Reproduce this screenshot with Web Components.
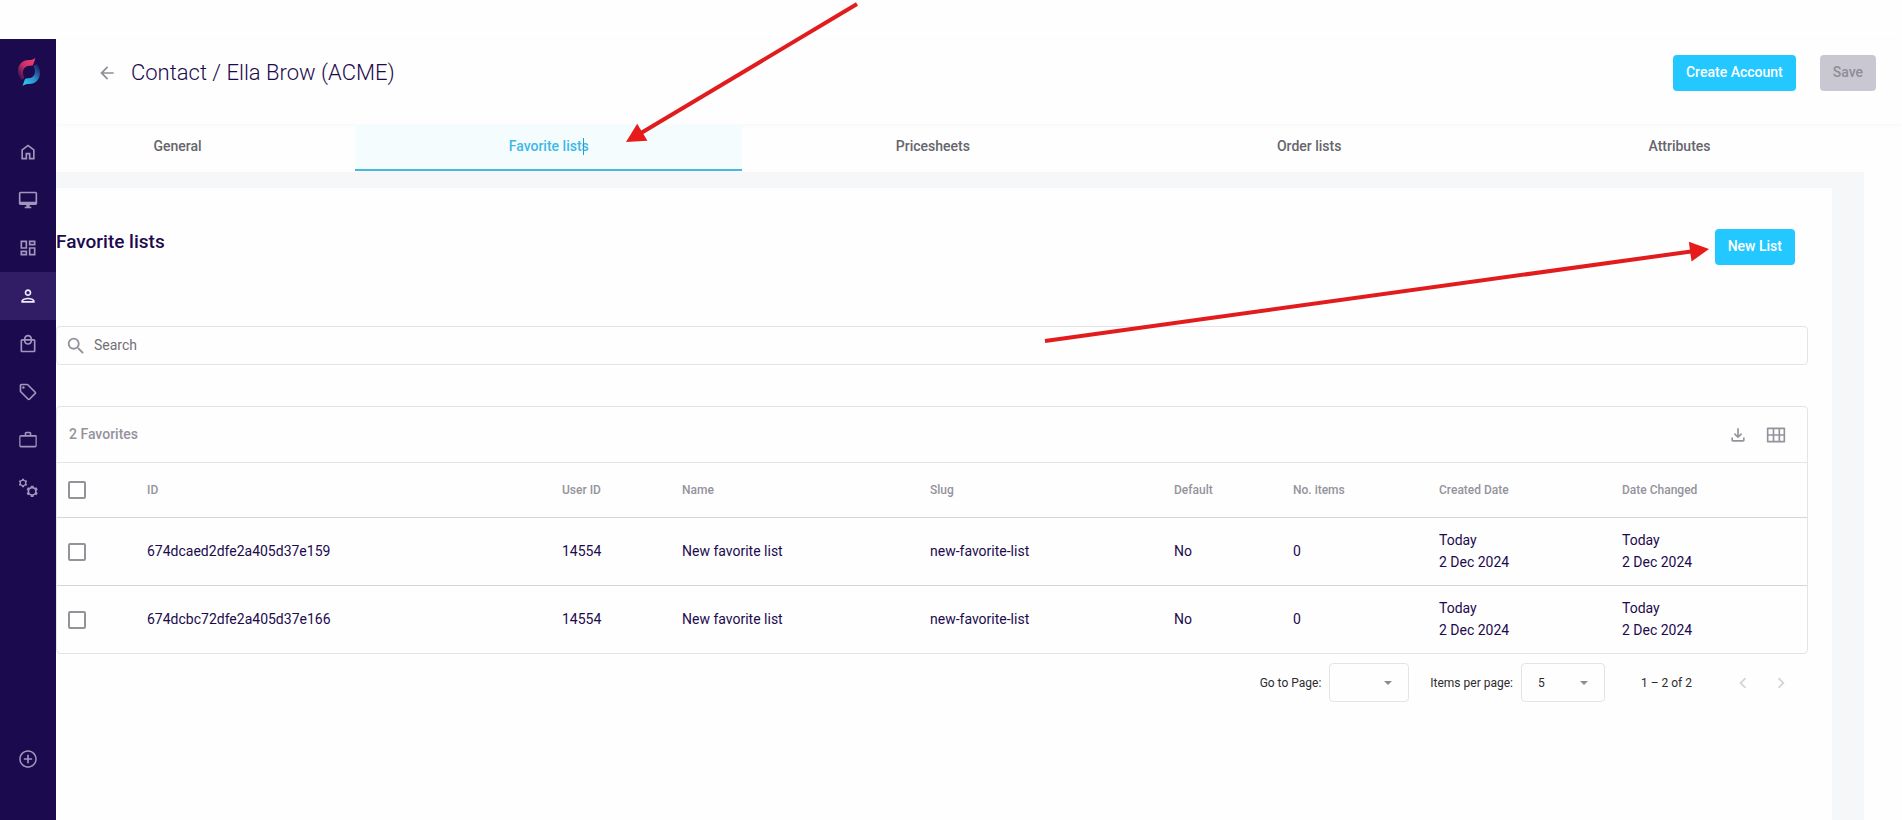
<!DOCTYPE html>
<html lang="en">
<head>
<meta charset="utf-8">
<title>Contact / Ella Brow (ACME)</title>
<style>
  body { margin: 0; background: #fefefe; color: #1c0a4e; font: 14px/20px Roboto, "Liberation Sans", sans-serif; }
</style>
</head>
<body>
<app-shell>
  <side-nav slot="nav"></side-nav>
  <page-header slot="header">
    Contact / Ella Brow (ACME)
    <ui-button slot="actions">Create Account</ui-button>
    <ui-button slot="actions" disabled>Save</ui-button>
  </page-header>
  <tab-bar slot="tabs"></tab-bar>
  <favorite-lists></favorite-lists>
</app-shell>

<script>
const ICONS = {
  home: 'M6 19h3v-6h6v6h3v-9l-6-4.5L6 10v9Zm-2 2V9l8-6 8 6v12h-7v-6h-2v6H4Z',
  monitor: 'M21 2H3c-1.1 0-2 .9-2 2v12c0 1.1.9 2 2 2h7v2H8v2h8v-2h-2v-2h7c1.1 0 2-.9 2-2V4c0-1.100-.9-2-2-2Zm0 12H3V4h18v10Z',
  dashboard: 'M19 5v2h-4V5h4M9 5v6H5V5h4m10 8v6h-4v-6h4M9 17v2H5v-2h4M21 3h-8v6h8V3ZM11 3H3v10h8V3Zm10 8h-8v10h8V11Zm-10 4H3v6h8v-6Z',
  person: 'M12 6c1.100 0 2 .9 2 2s-.9 2-2 2-2-.9-2-2 .9-2 2-2m0 10c2.700 0 5.800 1.290 6 2H6c.23-.72 3.310-2 6-2m0-12C9.790 4 8 5.790 8 8s1.790 4 4 4 4-1.790 4-4-1.790-4-4-4Zm0 10c-2.670 0-8 1.340-8 4v2h16v-2c0-2.660-5.330-4-8-4Z',
  bag: 'M19 6h-2c0-2.760-2.240-5-5-5S7 3.240 7 6H5c-1.100 0-2 .9-2 2v12c0 1.100.9 2 2 2h14c1.100 0 2-.9 2-2V8c0-1.100-.9-2-2-2Zm-7-3c1.660 0 3 1.340 3 3H9c0-1.660 1.340-3 3-3Zm7 17H5V8h2c0 2.760 2.240 5 5 5s5-2.240 5-5h2v12ZM9 8h6c0 1.660-1.340 3-3 3S9 9.660 9 8Z',
  tag: 'm21.410 11.580-9-9C12.050 2.220 11.550 2 11 2H4c-1.100 0-2 .9-2 2v7c0 .55.22 1.050.59 1.420l9 9c.36.36.86.58 1.410.58s1.050-.22 1.410-.59l7-7c.37-.36.59-.86.59-1.410s-.23-1.060-.59-1.420ZM13 20.010 4 11V4h7v-.01l9 9-7 7.020ZM6.500 5a1.500 1.500 0 1 0 0 3 1.500 1.500 0 0 0 0-3Z',
  work: 'M14 6V4h-4v2h4ZM3 8v11h18V8H3Zm18-2c.83 0 1.500.67 1.500 1.500V19c0 1.100-.9 2-2 2h-17c-1.100 0-2-.9-2-2V8c0-1.100.9-2 2-2H8V4c0-1.100.9-2 2-2h4c1.100 0 2 .9 2 2v2h5Z',
  add: 'M13 7h-2v4H7v2h4v4h2v-4h4v-2h-4V7Zm-1-5.500C6.200 1.500 1.500 6.200 1.500 12S6.200 22.500 12 22.500 22.500 17.800 22.500 12 17.800 1.500 12 1.500Zm0 19.200c-4.800 0-8.700-3.900-8.700-8.700S7.200 3.300 12 3.300s8.700 3.900 8.700 8.700-3.900 8.700-8.700 8.700Z',
  back: 'M20 11H7.830l5.590-5.590L12 4l-8 8 8 8 1.410-1.410L7.830 13H20v-2Z',
  search: 'M15.500 14h-.79l-.28-.27A6.470 6.470 0 0 0 16 9.500 6.500 6.500 0 1 0 9.500 16c1.610 0 3.090-.59 4.230-1.570l.27.28v.79l5 4.990L20.490 19l-4.990-5Zm-6 0C7.010 14 5 11.990 5 9.500S7.010 5 9.500 5 14 7.010 14 9.500 11.990 14 9.500 14Z',
  download: 'M12 16l-5-5 1.400-1.450 2.600 2.600V4h2v8.150l2.600-2.600L17 11l-5 5ZM6 20c-1.100 0-2-.9-2-2v-3h2v3h12v-3h2v3c0 1.100-.9 2-2 2H6Z',
  grid: 'M22 3H2C1.400 3 1 3.400 1 4v16c0 .6.400 1 1 1h20c.6 0 1-.4 1-1V4c0-.6-.4-1-1-1ZM8 11H3V5h5v6Zm7 0h-5V5h5v6Zm6 0h-4V5h4v6ZM8 19H3v-6h5v6Zm7 0h-5v-6h5v6Zm6 0h-4v-6h4v6Z',
  prev: 'M15.410 7.410 14 6l-6 6 6 6 1.410-1.410L10.830 12l4.580-4.590Z',
  next: 'M10 6 8.590 7.410 13.170 12l-4.580 4.590L10 18l6-6-6-6Z'
};

/* Outline of a gear with six teeth, with a round hole in it */
function gear(cx, cy, r) {
  const pts = [];
  for (let i = 0; i < 6; i++) {
    for (const [da, k] of [[-13, 1], [13, 1], [20, .78], [40, .78]]) {
      const a = (i * 60 + 30 + da - 60) * Math.PI / 180;
      pts.push((cx + r * k * Math.cos(a)).toFixed(2) + ' ' + (cy + r * k * Math.sin(a)).toFixed(2));
    }
  }
  const h = r * .5;
  return `M${pts.join('L')}ZM${cx - h} ${cy}a${h} ${h} 0 1 0 ${2 * h} 0a${h} ${h} 0 1 0 ${-2 * h} 0Z`;
}
ICONS.gears = gear(6, 6, 5.2) + gear(17, 16, 7);

function define(name, html, setup) {
  const template = document.createElement('template');
  template.innerHTML = html;
  customElements.define(name, class extends HTMLElement {
    constructor() {
      super();
      this.attachShadow({ mode: 'open' }).append(template.content.cloneNode(true));
    }
    connectedCallback() { if (setup) setup(this, this.shadowRoot); }
  });
}

define('ui-icon', `
  <style>
    :host { display: inline-flex; width: 20px; height: 20px; flex: none; }
    svg { width: 100%; height: 100%; fill: currentColor; fill-rule: evenodd; }
  </style>
  <svg viewBox="0 0 24 24" aria-hidden="true"><path/></svg>`,
  (el, root) => root.querySelector('path').setAttribute('d', ICONS[el.getAttribute('name')]));

define('ui-button', `
  <style>
    :host { display: inline-block; }
    button { display: block; height: 36px; padding: 0 13px 2px; border: 0; border-radius: 4px; background: #22c8ff; color: #fff; font: 500 14px/20px Roboto, "Liberation Sans", sans-serif; }
    button:disabled { background: #c9c8d2; color: #8e8d98; }
  </style>
  <button type="button"><slot></slot></button>`,
  (el, root) => { root.querySelector('button').disabled = el.hasAttribute('disabled'); });

define('app-shell', `
  <style>
    :host { display: grid; grid-template-columns: 56px minmax(0, 1fr); box-sizing: border-box; min-height: 100vh; padding-top: 39px; overflow-x: clip; }
    aside { display: flex; position: relative; z-index: 1; }
    .page { display: flex; flex-direction: column; min-width: 0; }
    main { display: flex; flex: 1; margin-right: 38px; padding: 16px 32px 0 0; background: #f6f7f9; }
    .tabs { margin: 0 38px 0 -56px; }
  </style>
  <aside><slot name="nav"></slot></aside>
  <div class="page">
    <slot name="header"></slot>
    <div class="tabs"><slot name="tabs"></slot></div>
    <main><slot></slot></main>
  </div>`);

define('side-nav', `
  <style>
    :host { display: flex; flex-direction: column; width: 56px; background: #1c0a4e; color: #a096bd; }
    .logo { display: flex; justify-content: center; height: 66px; padding: 0 0 23px 2px; align-items: center; }
    nav { display: flex; flex-direction: column; flex: 1; }
    a { display: flex; align-items: center; justify-content: center; height: 48px; color: inherit; }
    a[aria-current] { background: #311c66; color: #efeaff; }
    .add { margin-top: auto; margin-bottom: 37px; }
  </style>
  <div class="logo">
    <svg width="24" height="28" viewBox="0 0 24 28" role="img" aria-label="Logo">
      <defs>
        <linearGradient id="r" x1="1" y1="0" x2="0" y2="1"><stop offset="0" stop-color="#ff3f6e"/><stop offset=".5" stop-color="#c93068"/><stop offset="1" stop-color="#1c0a4e"/></linearGradient>
        <linearGradient id="b" x1="0" y1="1" x2="1" y2="0"><stop offset="0" stop-color="#2fd0ff"/><stop offset=".5" stop-color="#2b90cc"/><stop offset="1" stop-color="#1c0a4e"/></linearGradient>
      </defs>
      <path fill="url(#r)" d="M18.500 0 16 7c-1 .6-2 .8-3.500.8C8.500 8 6 10.500 6 14.500c0 2 .6 4 1.500 5.500L4.500 22C2.500 20 1 17 1 13 1 6.500 5.500 2 12 2c2.500 0 4.500-.5 6.500-2Z"/>
      <path fill="url(#b)" d="M5.500 28 8 21c1-.6 2-.8 3.500-.8 4-.2 6.500-2.700 6.500-6.700 0-2-.6-4-1.500-5.500l3-2C21.500 8 23 11 23 15c0 6.500-4.500 11-11 11-2.500 0-4.500.5-6.500 2Z"/>
    </svg>
  </div>
  <nav aria-label="Main">
    <a href="#" aria-label="Home"><ui-icon name="home"></ui-icon></a>
    <a href="#" aria-label="Sites"><ui-icon name="monitor"></ui-icon></a>
    <a href="#" aria-label="Dashboard"><ui-icon name="dashboard"></ui-icon></a>
    <a href="#" aria-label="Contacts" aria-current="page"><ui-icon name="person"></ui-icon></a>
    <a href="#" aria-label="Orders"><ui-icon name="bag"></ui-icon></a>
    <a href="#" aria-label="Prices"><ui-icon name="tag"></ui-icon></a>
    <a href="#" aria-label="Business"><ui-icon name="work"></ui-icon></a>
    <a href="#" aria-label="Settings"><ui-icon name="gears"></ui-icon></a>
    <a href="#" class="add" aria-label="Add"><ui-icon name="add"></ui-icon></a>
  </nav>`);

define('page-header', `
  <style>
    :host { display: flex; align-items: center; height: 67px; padding: 0 26px 18px 41px; box-shadow: 0 1px 4px rgba(0, 0, 0, .04); }
    a { display: flex; color: #8f8e96; margin-right: 14px; }
    h1 { flex: 1; margin: 0; font-size: 22px; line-height: 32px; font-weight: 300; }
    .actions { display: flex; gap: 24px; }
  </style>
  <a href="#" aria-label="Back"><ui-icon name="back"></ui-icon></a>
  <h1><slot></slot></h1>
  <div class="actions"><slot name="actions"></slot></div>`);

define('pointer-arrow', `
  <style>
    :host { display: block; pointer-events: none; }
    svg { display: block; overflow: visible; }
    line { stroke: #e21b1d; stroke-width: 4; }
    polygon { fill: #e81b1b; }
  </style>
  <svg aria-hidden="true"><line/><polygon/></svg>`,
  (el, root) => {
    const [x1, y1, x2, y2] = el.getAttribute('points').split(' ').map(Number);
    const len = Math.hypot(x2 - x1, y2 - y1), ux = (x2 - x1) / len, uy = (y2 - y1) / len;
    const bx = x2 - ux * 19, by = y2 - uy * 19;
    const svg = root.querySelector('svg');
    svg.setAttribute('width', Math.abs(x2 - x1));
    svg.setAttribute('height', Math.abs(y2 - y1));
    const line = root.querySelector('line');
    Object.entries({ x1, y1, x2: bx + ux, y2: by + uy }).forEach(([k, v]) => line.setAttribute(k, v));
    root.querySelector('polygon').setAttribute('points',
      `${x2},${y2} ${bx - uy * 10},${by + ux * 10} ${bx + uy * 10},${by - ux * 10}`);
  });

define('tab-bar', `
  <style>
    :host { display: block; }
    nav { display: flex; box-sizing: border-box; height: 48px; padding-bottom: 1px; }
    a { display: flex; flex: 1 1 auto; align-items: center; justify-content: center; box-sizing: border-box; padding-bottom: 2px; border-bottom: 2px solid transparent; color: #66656b; font-weight: 500; text-decoration: none; }
    a[aria-current] { position: relative; background: #f5fcfe; border-bottom-color: #46b9d9; color: #3cb9e6; }
    .label { position: relative; }
    .caret { position: absolute; right: 5px; top: 2px; width: 1px; height: 17px; background: #2a9fc6; }
    pointer-arrow { position: absolute; left: calc(100% + 37px); bottom: 14px; }
  </style>
  <nav aria-label="Contact sections">
    <a href="#">General</a>
    <a href="#" aria-current="page"><span class="label">Favorite lists<span class="caret"></span><pointer-arrow points="231 0 0 138"></pointer-arrow></span></a>
    <a href="#">Pricesheets</a>
    <a href="#">Order lists</a>
    <a href="#">Attributes</a>
  </nav>`);

define('favorite-table', `
  <style>
    :host { display: block; border: 1px solid #e4e4e8; border-radius: 4px; }
    .bar { display: flex; align-items: center; height: 53px; padding: 0 21px 2px 12px; color: #94939c; font-weight: 500; border-bottom: 1px solid #e4e4e8; }
    .bar span { flex: 1; }
    .bar button { display: flex; border: 0; padding: 0; margin: 2px 0 0 18px; background: none; color: #94939c; }
    table { width: 100%; table-layout: fixed; border-collapse: collapse; }
    th, td { padding: 0; text-align: left; white-space: nowrap; }
    th { height: 54px; color: #94939c; font-size: 12px; font-weight: 500; }
    td { height: 65px; padding-bottom: 2px; line-height: 22px; }
    td:first-child { height: 67px; padding-bottom: 0; }
    thead tr, tbody tr:not(:last-child) { border-bottom: 1px solid #d6d6da; }
    input { display: block; appearance: none; box-sizing: border-box; width: 18px; height: 18px; margin: 0 0 0 11px; border: 2px solid #949399; border-radius: 2px; background: #fff; }
  </style>
  <div class="bar"><span>2 Favorites</span>
    <button type="button" aria-label="Download"><ui-icon name="download"></ui-icon></button>
    <button type="button" aria-label="Columns"><ui-icon name="grid"></ui-icon></button>
  </div>
  <table>
    <colgroup></colgroup>
    <thead><tr></tr></thead>
    <tbody></tbody>
  </table>`,
  (el, root) => {
    const cols = [['', 90], ['ID', 415], ['User ID', 120], ['Name', 248], ['Slug', 244], ['Default', 119], ['No. items', 146], ['Created Date', 183], ['Date Changed', 185]];
    const day = 'Today<br>2 Dec 2024';
    const rows = ['674dcaed2dfe2a405d37e159', '674dcbc72dfe2a405d37e166']
      .map(id => [id, '14554', 'New favorite list', 'new-favorite-list', 'No', '0', day, day]);
    root.querySelector('colgroup').innerHTML = cols.map(c => `<col style="width:${c[1]}px">`).join('');
    root.querySelector('thead tr').innerHTML = cols.map(c => `<th>${c[0] || '<input type="checkbox" aria-label="Select all">'}</th>`).join('');
    root.querySelector('tbody').innerHTML = rows.map(r =>
      `<tr><td><input type="checkbox" aria-label="Select ${r[0]}"></td>${r.map(v => `<td>${v}</td>`).join('')}</tr>`).join('');
  });

define('page-picker', `
  <style>
    :host { display: flex; align-items: center; justify-content: flex-end; padding: 9px 16px 0 0; color: #2c2b30; font-size: 12px; }
    .box { position: relative; margin: 0 20px 0 8px; }
    select { display: block; appearance: none; box-sizing: border-box; width: 84px; height: 39px; padding: 0 16px; border: 1px solid #e4e4e8; border-radius: 4px; background: #fefefe; color: inherit; font: inherit; }
    .narrow { margin-right: 21px; }
    .narrow select { width: 80px; }
    .box::after { content: ""; position: absolute; right: 17px; top: 18px; border: 4px solid transparent; border-top-color: #8c8b92; border-bottom: 0; }
    .range { margin: 0 40px 0 16px; }
    button { display: flex; border: 0; padding: 0; margin-left: 16px; background: none; color: #d5d5d9; }
    button:first-of-type { margin-left: 0; }
    ui-icon { width: 22px; height: 22px; }
  </style>
  <label for="page">Go to Page:</label>
  <span class="box narrow"><select id="page"><option></option></select></span>
  <label for="size">Items per page:</label>
  <span class="box"><select id="size"><option>5</option><option>10</option></select></span>
  <span class="range">1 – 2 of 2</span>
  <button type="button" aria-label="Previous page" disabled><ui-icon name="prev"></ui-icon></button>
  <button type="button" aria-label="Next page" disabled><ui-icon name="next"></ui-icon></button>`);

define('favorite-lists', `
  <style>
    :host { display: block; flex: 1; min-width: 0; padding: 41px 24px 0 0; background: #fefefe; }
    header { display: flex; align-items: flex-start; justify-content: space-between; padding-right: 13px; }
    h2 { margin: 0; font-size: 19px; line-height: 26px; font-weight: 500; }
    .new { position: relative; }
    pointer-arrow { position: absolute; right: calc(100% + 6px); top: 20px; }
    .search { display: flex; align-items: center; gap: 7px; box-sizing: border-box; height: 39px; margin: 61px 0 41px; padding-left: 8px; border: 1px solid #e4e4e8; border-radius: 4px; color: #94939c; }
    .search ui-icon { width: 22px; height: 22px; }
    input { flex: 1; min-width: 0; border: 0; outline: 0; padding: 0 0 2px; background: none; font: inherit; color: #1c0a4e; }
    input::placeholder { color: #717076; opacity: 1; }
  </style>
  <header>
    <h2>Favorite lists</h2>
    <div class="new"><ui-button>New List</ui-button><pointer-arrow points="0 92 664 0"></pointer-arrow></div>
  </header>
  <label class="search"><ui-icon name="search"></ui-icon><input type="search" placeholder="Search" aria-label="Search"></label>
  <favorite-table></favorite-table>
  <page-picker></page-picker>`);
</script>
</body>
</html>
